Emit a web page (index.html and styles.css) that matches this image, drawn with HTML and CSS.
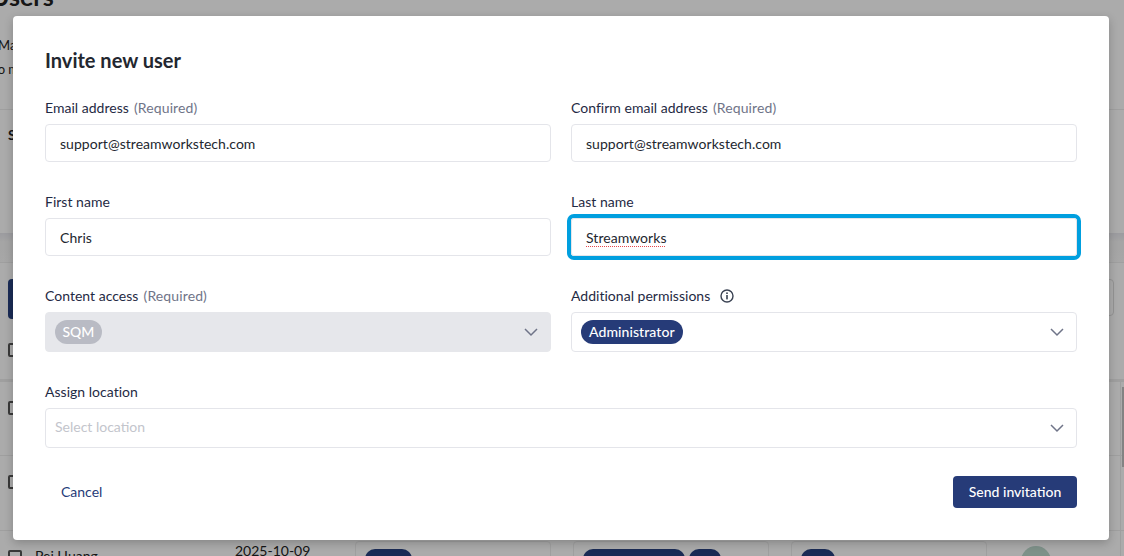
FILE: index.html
```html
<!DOCTYPE html>
<html lang="en">
<head>
<meta charset="utf-8">
<title>Invite new user</title>
<link rel="stylesheet" href="styles.css">
</head>
<body>
<div class="backdrop-page">
  <div class="bg-title">Users</div>
  <div class="bg-text bg-t1">Manage</div>
  <div class="bg-text bg-t2">to manage</div>
  <div class="bg-rule bg-r1"></div>
  <div class="bg-text bg-s">S</div>
  <div class="bg-band"></div>
  <div class="bg-rule bg-r5"></div>
  <div class="bg-btn"></div>
  <div class="bg-right-box"></div>
  <div class="bg-check bg-c1"></div>
  <div class="bg-rule bg-r2"></div>
  <div class="bg-check bg-c2"></div>
  <div class="bg-rule bg-r3"></div>
  <div class="bg-check bg-c3"></div>
  <div class="bg-rule bg-r4"></div>
  <div class="bg-check bg-c4"></div>
  <div class="bg-name">Pei Huang</div>
  <div class="bg-date">2025-10-09</div>
  <div class="bg-cell bg-cell1"><span class="bg-pill bg-p60"></span></div>
  <div class="bg-cell bg-cell2"><span class="bg-pill bg-p102"></span><span class="bg-pill bg-p32"></span></div>
  <div class="bg-cell bg-cell3"><span class="bg-pill bg-p34"></span></div>
  <div class="bg-avatar"></div>
  <div class="bg-scrolltrack"></div>
  <div class="bg-scroll"></div>
</div>
<div class="overlay"></div>
<main class="modal">
  <h1 class="modal-title">Invite new user</h1>
  <form class="form-grid">
    <div class="field">
      <div class="label">Email address <span class="req">(Required)</span></div>
      <div class="input">support@streamworkstech.com</div>
    </div>
    <div class="field">
      <div class="label">Confirm email address <span class="req">(Required)</span></div>
      <div class="input">support@streamworkstech.com</div>
    </div>
    <div class="field">
      <div class="label">First name</div>
      <div class="input">Chris</div>
    </div>
    <div class="field">
      <div class="label">Last name</div>
      <div class="input input-focus"><span class="misspelled">Streamworks</span></div>
    </div>
    <div class="field">
      <div class="label">Content access <span class="req">(Required)</span></div>
      <div class="select select-disabled">
        <span class="chip chip-disabled">SQM</span>
        <svg class="chev" width="16" height="10" viewBox="0 0 16 10"><path d="M2 2l6 6 6-6" fill="none" stroke="#6f7488" stroke-width="1.5"/></svg>
      </div>
    </div>
    <div class="field">
      <div class="label">Additional permissions<svg class="info" width="16" height="16" viewBox="0 0 16 16"><circle cx="8" cy="8" r="6" fill="none" stroke="#3a4252" stroke-width="1.4"/><rect x="7.2" y="7" width="1.6" height="4.4" fill="#3a4252"/><rect x="7.2" y="4.4" width="1.6" height="1.6" fill="#3a4252"/></svg></div>
      <div class="select">
        <span class="chip">Administrator</span>
        <svg class="chev" width="16" height="10" viewBox="0 0 16 10"><path d="M2 2l6 6 6-6" fill="none" stroke="#6f7488" stroke-width="1.5"/></svg>
      </div>
    </div>
    <div class="field field-wide">
      <div class="label">Assign location</div>
      <div class="select">
        <span class="placeholder">Select location</span>
        <svg class="chev" width="16" height="10" viewBox="0 0 16 10"><path d="M2 2l6 6 6-6" fill="none" stroke="#6f7488" stroke-width="1.5"/></svg>
      </div>
    </div>
  </form>
  <div class="actions">
    <a class="cancel">Cancel</a>
    <button class="send" type="button">Send invitation</button>
  </div>
</main>
</body>
</html>
```
FILE: styles.css
```css
* { box-sizing: border-box; }
html, body { margin: 0; height: 100%; }
body {
  width: 1124px; height: 556px; overflow: hidden; position: relative;
  font-family: Lato, "Noto Sans", sans-serif; background: #fff; color: #1f2a44;
}
.backdrop-page { position: absolute; inset: 0; background: #fff; }
.overlay { position: absolute; inset: 0; background: rgba(0,0,0,.33); }
.backdrop-page > * { position: absolute; }
.bg-title { left: -9px; top: -19px; font-size: 25px; font-weight: 700; color: #222; }
.bg-text { font-size: 13px; color: #222; }
.bg-t1 { left: -2px; top: 37px; }
.bg-t2 { left: -7px; top: 61px; }
.bg-s { left: 8px; top: 126px; font-size: 14px; font-weight: 700; }
.bg-rule { left: 0; width: 1124px; height: 1px; background: #eee; }
.bg-r1 { top: 109px; } .bg-r2 { top: 379px; height: 3px; } .bg-r3 { top: 455px; } .bg-r4 { top: 530px; } .bg-r5 { top: 262px; }
.bg-band { left: 0; top: 233px; width: 1124px; height: 29px; background: linear-gradient(#e8e8ee, #f6f6f6 30%, #f9f9f9); }
.bg-btn { left: 8px; top: 279px; width: 20px; height: 40px; border-radius: 4px; background: #27417f; }
.bg-right-box { left: 1090px; top: 279px; width: 24px; height: 37px; border: 1px solid #ddd; border-radius: 4px; }
.bg-check { left: 8px; width: 14px; height: 14px; border: 2px solid #555; border-radius: 2px; }
.bg-c1 { top: 343px; } .bg-c2 { top: 401px; } .bg-c3 { top: 475px; } .bg-c4 { top: 550px; }
.bg-name { left: 35px; top: 547px; font-size: 14px; color: #222; }
.bg-date { left: 235px; top: 542px; font-size: 14px; color: #222; }
.bg-cell { top: 541px; height: 30px; border: 1px solid #eee; border-radius: 4px; padding: 7px 9px; display: flex; gap: 4px; width: 196px; }
.bg-cell1 { left: 355px; } .bg-cell2 { left: 573px; } .bg-cell3 { left: 791px; }
.bg-pill { display: block; height: 20px; border-radius: 10px; background: #27417f; }
.bg-p60 { width: 47px; } .bg-p102 { width: 102px; } .bg-p32 { width: 32px; } .bg-p34 { width: 34px; }
.bg-avatar { left: 1021px; top: 546px; width: 30px; height: 30px; border-radius: 50%; background: #bcd8cd; }
.bg-scrolltrack { left: 1120px; top: 382px; width: 1px; height: 174px; background: #eee; }
.bg-scroll { left: 1122px; top: 387px; width: 2px; height: 80px; background: #c4c4c4; }

.modal {
  position: absolute; left: 13px; top: 16px; width: 1096px; height: 524px;
  background: #fff; border-radius: 4px; padding: 31px 32px 32px;
  box-shadow: 0 3px 10px rgba(0,0,0,.22);
}
.modal-title { margin: 0; font-size: 20px; line-height: 26px; font-weight: 700; color: #23272f; }
.form-grid {
  display: grid; grid-template-columns: 506px 506px; column-gap: 20px; row-gap: 30px;
  margin-top: 25px;
}
.field { display: flex; flex-direction: column; min-width: 0; }
.field-wide { grid-column: 1 / -1; }
.label { height: 20px; font-size: 14px; line-height: 20px; margin-bottom: 6px; color: #1f2a44; letter-spacing: .02px; }
.req { color: #6f7488; margin-left: 1.5px; letter-spacing: .12px; }
.input {
  height: 38px; border: 1px solid #e4e5ea; border-radius: 4px; padding: 0 14px;
  display: flex; align-items: center; font-size: 14px; color: #23272f; letter-spacing: .04px;
}
.input-focus { box-shadow: 0 0 0 4px #009fdf; border-radius: 3px; }
.misspelled { text-decoration: underline dotted #e5484d 1px; text-underline-offset: 3px; }
.select {
  height: 40px; border: 1px solid #e4e5ea; border-radius: 4px; padding: 0 9px;
  display: flex; align-items: center; justify-content: space-between;
  font-size: 14px;
}
.select-disabled { background: #e6e7eb; border-color: #e6e7eb; }
.chip {
  height: 24px; line-height: 24px; border-radius: 12px; padding: 0 8px;
  background: #263b78; color: #fff; font-size: 14px; font-weight: 500; letter-spacing: .08px;
}
.chip-disabled { background: #b9bbc4; padding: 0 7.5px; letter-spacing: 0; }
.placeholder { color: #c3c5cc; margin-bottom: 3px; }
.chev { margin-right: 2px; }
.info { margin-left: 9px; vertical-align: -3px; }
.actions { display: flex; justify-content: space-between; align-items: center; margin-top: 28px; }
.cancel { font-size: 14px; color: #263b78; padding-left: 16px; margin-bottom: 2px; }
.send {
  width: 124px; height: 32px; border: 0; border-radius: 4px; background: #263b78;
  color: #fff; font: 500 14px Lato, sans-serif; padding: 0 0 2px;
}
```
